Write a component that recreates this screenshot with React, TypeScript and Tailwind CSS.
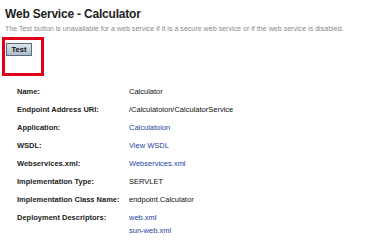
import React from "react";

const rows: { label: string; values: string[]; link?: boolean }[] = [
  { label: "Name:", values: ["Calculator"] },
  { label: "Endpoint Address URI:", values: ["/Calculatoion/CalculatorService"] },
  { label: "Application:", values: ["Calculatoion"], link: true },
  { label: "WSDL:", values: ["View WSDL"], link: true },
  { label: "Webservices.xml:", values: ["Webservices.xml"], link: true },
  { label: "Implementation Type:", values: ["SERVLET"] },
  { label: "Implementation Class Name:", values: ["endpoint.Calculator"] },
  { label: "Deployment Descriptors:", values: ["web.xml", "sun-web.xml"], link: true },
];

export default function App() {
  return (
    <div
      className="w-[380px] h-[245px] bg-white overflow-hidden"
      style={{ fontFamily: '"Liberation Sans", Arial, sans-serif' }}
    >
      <div className="pl-[5px] pt-[6px]">
        <h1 className="text-[12px] leading-[16px] font-bold tracking-[-0.2px] text-[#222]">Web Service - Calculator</h1>
        <p className="text-[7.1px] leading-[10px] mt-[2px] text-[#8a8a8a] whitespace-nowrap">
          The Test button is unavailable for a web service if it is a secure web service or if the web service is disabled.
        </p>
      </div>
      <div className="ml-[2px] mt-[3px] w-[42px] h-[39px] border-[3px] border-[#e1001a] pl-[1px] pt-[3px]">
        <button className="w-[26px] h-[13px] border border-[#5c6a78] bg-gradient-to-b from-[#dbe5ee] to-[#a9bccd] text-[7.5px] font-bold text-[#111] leading-[11px] flex items-center justify-center">
          Test
        </button>
      </div>
      <div className="mt-[9px] pl-[17px] flex flex-col">
        {rows.map((r) => (
          <div key={r.label} className="flex min-h-[18px]">
            <div className="w-[112px] text-[7.5px] font-bold leading-[13px] text-[#222] whitespace-nowrap">{r.label}</div>
            <div className="flex flex-col">
              {r.values.map((v) => (
                <span
                  key={v}
                  className={`text-[7.5px] leading-[13px] whitespace-nowrap ${r.link ? "text-[#2346a0]" : "text-[#111]"}`}
                >
                  {v}
                </span>
              ))}
            </div>
          </div>
        ))}
      </div>
    </div>
  );
}
